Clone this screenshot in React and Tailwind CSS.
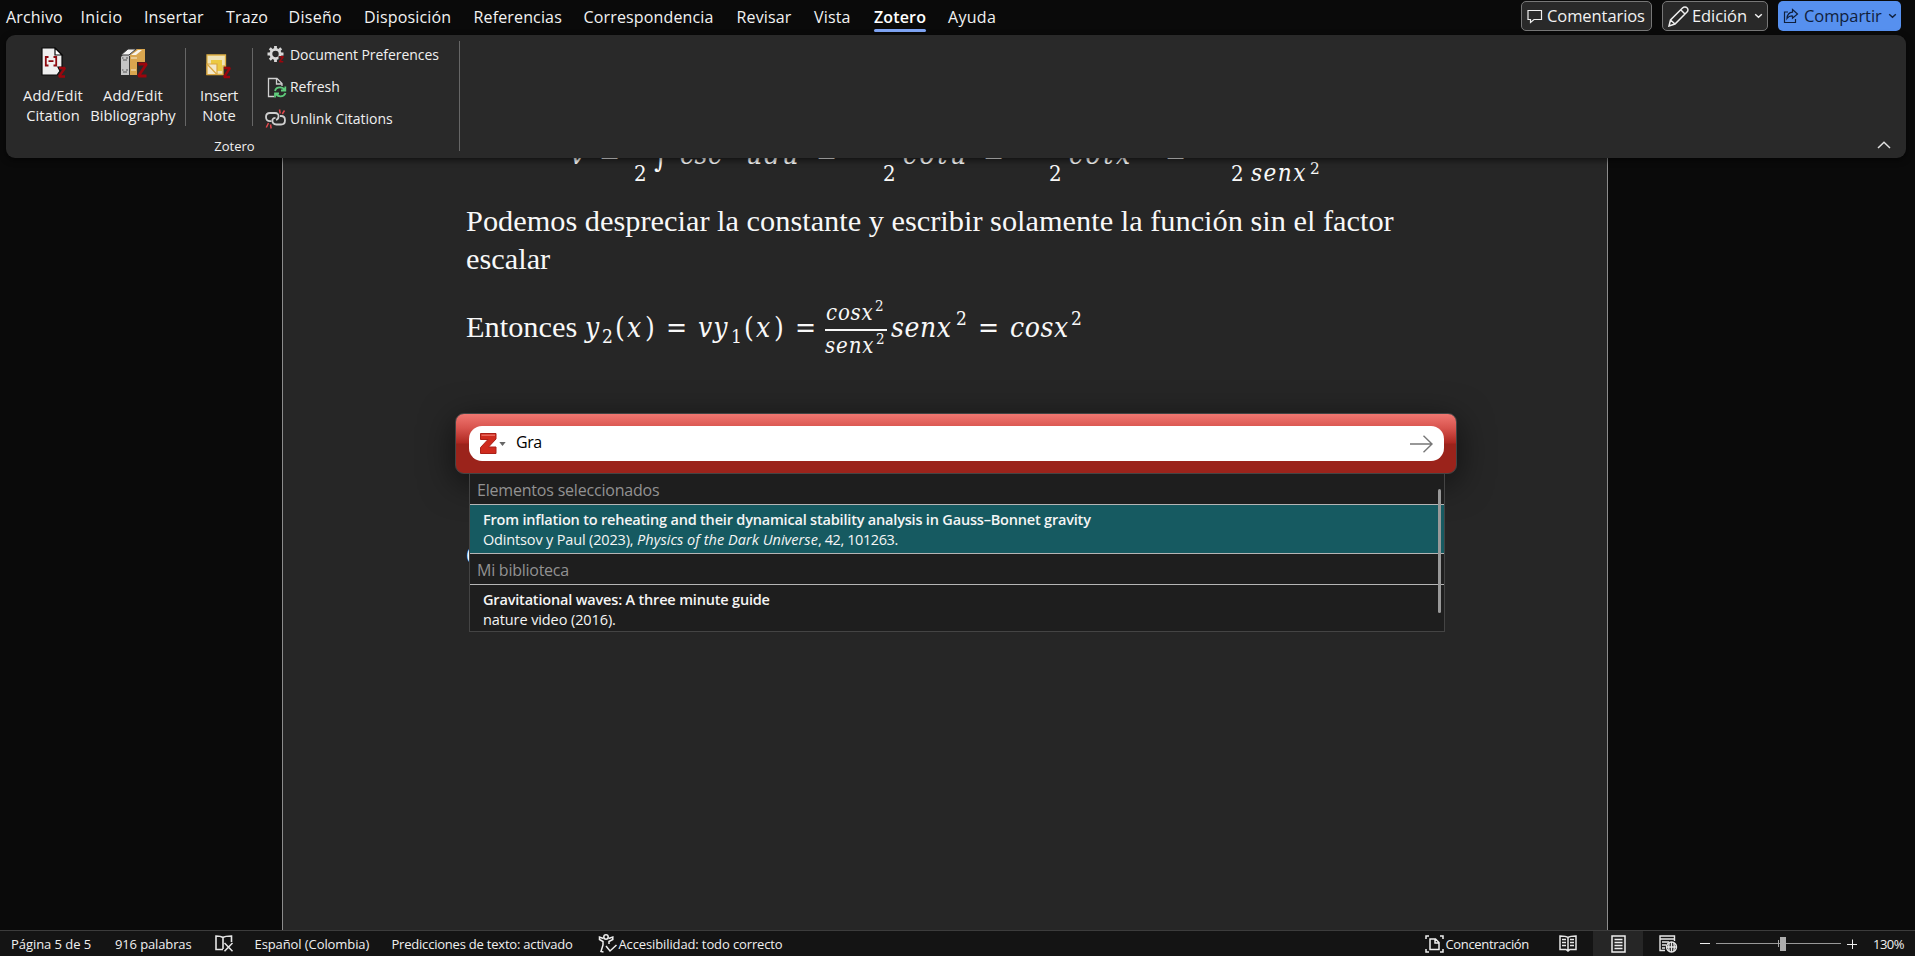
import React from "react";

const tabs = [
  ["Archivo", "w-[74.5px]"],
  ["Inicio", "w-[63.5px] tracking-[0.4px]"],
  ["Insertar", "w-[82px]"],
  ["Trazo", "w-[62.5px]"],
  ["Diseño", "w-[75.5px] tracking-[0.3px]"],
  ["Disposición", "w-[109.5px]"],
  ["Referencias", "w-[110px]"],
  ["Correspondencia", "w-[153px]"],
  ["Revisar", "w-[77.5px]"],
  ["Vista", "w-[60px]"],
  ["Zotero", "w-[74px]"],
  ["Ayuda", "w-[60px] tracking-[0.3px]"],
];

const Z = ({ x, y, w, h, sw = 2.6, color = "#9a060d" }) => (
  <path
    d={`M${x} ${y}H${x + w}L${x} ${y + h}H${x + w}`}
    fill="none"
    stroke={color}
    strokeWidth={sw}
    strokeLinejoin="bevel"
  />
);

const CitationIcon = () => (
  <svg width="26" height="32" viewBox="0 0 26 32">
    <path d="M1 1H14L21 8V20H17L19 24L16 28H1Z" fill="#efefef" stroke="#0a0a0a" strokeWidth="1.2" />
    <path d="M14 1V8H21Z" fill="#fff" stroke="#0a0a0a" strokeWidth="1.2" />
    <path d="M7.5 10H4.8V18.5H7.5M12.5 10H15.2V18.5H12.5M7.5 14.2H12.5" fill="none" stroke="#8e0a10" strokeWidth="1.8" />
    <Z x={18} y={21} w={6} h={8.500} sw={2.3} />
  </svg>
);

const BooksIcon = () => (
  <svg width="28" height="32" viewBox="0 0 28 32">
    <path d="M1 10L8 2H17L10 8V28H1Z" fill="#c4c4c4" />
    <path d="M1 8L8 2H16L9 8Z" fill="#f3f3f3" stroke="#333" strokeWidth="1" />
    <path d="M10 8L17 2H25V15H17V28H10Z" fill="#d9a64f" />
    <path d="M11 8L18 3H22L16 8Z" fill="#f8f4ea" />
    <path d="M11 11H17M11 23H16" stroke="#f6ead0" strokeWidth="1.2" />
    <path d="M2 11H3.500M6 11H8M3 13H7M2 23H3.500M6 23H8M3 25H7" stroke="#555" strokeWidth="1" />
    <path d="M9.500 9V28" stroke="#3a3a3a" strokeWidth="1" />
    <Z x={18.500} y={17} w={8} h={12} sw={2.800} />
  </svg>
);

const NoteIcon = () => (
  <svg width="26" height="26" viewBox="0 0 26 26">
    <path d="M1 1H19.500V12H17V20.500H1Z" fill="#efe3b8" stroke="#dfb145" strokeWidth="1.300" />
    <path d="M5 6H16V17H5Z" fill="#ecca42" />
    <path d="M1 10H11V20.500H1Z" fill="#f4e9ca" stroke="#d9a640" strokeWidth="1.200" />
    <path d="M1 10L11 20.500" stroke="#d9a640" strokeWidth="1.200" />
    <Z x={18} y={14} w={6} h={9} sw={2.300} />
  </svg>
);

const GearIcon = () => (
  <svg width="20" height="20" viewBox="0 0 20 20">
    <circle cx="8.500" cy="9" r="4.600" fill="none" stroke="#d8d8d8" strokeWidth="2.800" />
    <g stroke="#d8d8d8" strokeWidth="2.800">
      <path d="M8.500 1V4M8.500 14V17M0.500 9H3.500M13.500 9H16.500M2.800 3.300L5 5.500M12 12.500L14.200 14.700M14.200 3.300L12 5.500M5 12.500L2.800 14.700" />
    </g>
    <path d="M11.500 11H18V18H11.500Z" fill="#292929" />
    <Z x={12.500} y={11.800} w={3.800} h={5} sw={1.500} />
  </svg>
);

const RefreshIcon = () => (
  <svg width="20" height="21" viewBox="0 0 20 21" fill="none">
    <path d="M7 19.500H1.500V1.500H10L15 6.500V9M9.500 1.500V7H15" stroke="#d0d0d0" strokeWidth="1.300" />
    <g stroke="#5ecb7b" strokeWidth="1.800">
      <path d="M8 14C8.500 11.500 10.500 10.300 13 10.300C15 10.300 16.800 11.500 17.500 13M18.300 9.500V13.500H14" />
      <path d="M18.500 16C17.500 18.500 15.800 19.300 13.500 19.300C11.500 19.300 9.800 18.500 8.800 16.800M8 20.500V16.500H12" />
    </g>
  </svg>
);

const UnlinkIcon = () => (
  <svg width="21" height="20" viewBox="0 0 21 20" fill="none">
    <g stroke="#cfcfcf" strokeWidth="1.800">
      <path d="M6.500 12.200H5C2.500 12.200 1 10.500 1 8C1 5.500 2.500 4 5 4H10C12.500 4 14 5.500 13.500 7.800C13.300 9.500 12.500 10.500 11 10.800" />
      <path d="M15 7H16C18.500 7 20 8.500 20 11.200C20 14 18.500 15.500 16 15.500H11.500C8.500 15.500 7 13.500 7.500 10.500C8 9.300 9 8.800 10.500 8.800" />
    </g>
    <path d="M14.500 0.500L15.200 4.500M19.500 1.500L17.300 5M3.500 14L1.300 18.500M5.500 15.500L6.200 19.500" stroke="#e0484c" strokeWidth="1.500" />
  </svg>
);

const Caret = ({ className }) => (
  <svg width="9" height="6" viewBox="0 0 9 6" className={className}>
    <path d="M1.200 1.200L4.500 4.300L7.800 1.200" fill="none" stroke="currentColor" strokeWidth="1.400" />
  </svg>
);

function Header() {
  return (
    <header className="flex h-[35px] shrink-0 justify-between">
      <nav className="flex pt-[5px] pl-[6px] text-[16px] leading-[24px] tracking-[0.15px] text-[#f2f2f2]">
        {tabs.map(([label, cls]) => (
          <div key={label} className={cls}>
            {label === "Zotero" ? (
              <span className="inline-flex flex-col font-semibold text-white">
                {label}
                <i className="h-[3px] w-[52px] rounded-sm bg-[#7fa5f5]" />
              </span>
            ) : (
              label
            )}
          </div>
        ))}
      </nav>
      <div className="flex items-start gap-[10px] pt-px pr-[14px] text-[16.5px] leading-[30px] tracking-[-0.08px] text-[#f2f2f2]">
        <div className="flex h-[30px] w-[131px] items-center rounded-[5px] border border-[#777] bg-[#292929] pl-[5px]">
          <svg width="16" height="15" viewBox="0 0 16 15" className="mr-[4px] shrink-0">
            <path d="M1 1.500H14.500V10.500H7L3.500 13.500V10.500H1Z" fill="none" stroke="#eee" strokeWidth="1.200" />
          </svg>
          <span className="-mt-px">Comentarios</span>
        </div>
        <div className="flex h-[30px] w-[106px] items-center rounded-[5px] border border-[#777] bg-[#292929] pl-[5px]">
          <svg width="21" height="21" viewBox="0 0 21 21" className="mr-[3px] shrink-0">
            <path d="M1 20L2.500 14L14.500 2C16 0.500 18 0.700 19 1.800C20.300 3 20.200 4.800 19 6L7 18ZM12.700 3.800L17.200 8.200M2.500 14L7 18" fill="none" stroke="#eee" strokeWidth="1.500" />
          </svg>
          <span className="-mt-px">Edición</span>
          <Caret className="ml-[7px] shrink-0" />
        </div>
        <div className="flex h-[30px] w-[123px] items-center rounded-[5px] bg-[#5690ef] pl-[5px] text-[#10203c]">
          <svg width="16" height="16" viewBox="0 0 16 16" className="mr-[5px] shrink-0">
            <path d="M5 4H1.500V14.500H12.500V11M9.500 1.500L14.500 6L9.500 10.300V8C7 7.800 5.500 8.500 4 10.500C4.200 7 6 4.500 9.500 4.200Z" fill="none" stroke="currentColor" strokeWidth="1.200" />
          </svg>
          <span className="-mt-px">Compartir</span>
          <Caret className="ml-[6px] shrink-0" />
        </div>
      </div>
    </header>
  );
}

function Ribbon() {
  return (
    <section className="relative z-10 mr-[9px] ml-[6px] flex h-[123px] shrink-0 justify-between rounded-[9px] bg-[#292929] text-[14.7px] leading-[20px] text-[#f0f0f0] shadow-[0_2px_6px_rgba(0,0,0,0.6)]">
      <div className="mt-[6px] flex h-[110px] w-[454px] flex-col border-r border-[#666]">
        <div className="flex h-[88px] text-center">
          <div className="flex w-[94px] flex-col items-center pt-[6px]">
            <div className="flex h-[38px] items-start pl-px"><CitationIcon /></div>
            <span className="tracking-[0.15px]">Add/Edit</span>
            <span className="tracking-[0.05px]">Citation</span>
          </div>
          <div className="flex w-[66px] flex-col items-center pt-[6px]">
            <div className="flex h-[38px] items-start pl-[2px]"><BooksIcon /></div>
            <span className="tracking-[0.15px]">Add/Edit</span>
            <span className="tracking-[-0.05px] whitespace-nowrap">Bibliography</span>
          </div>
          <i className="mt-[7px] ml-[19px] h-[78px] w-px bg-[#666]" />
          <div className="flex w-[66px] flex-col items-center pt-[6px]">
            <div className="flex h-[38px] items-start pt-[7px]"><NoteIcon /></div>
            <span className="tracking-[-0.3px]">Insert</span>
            <span>Note</span>
          </div>
          <i className="mt-[7px] h-[78px] w-px bg-[#666]" />
          <ul className="ml-[12px] flex flex-col text-left text-[14px]">
            <li className="flex h-[28px] shrink-0 items-center"><span className="w-[25px] pl-[2px]"><GearIcon /></span><span className="tracking-[-0.05px]">Document Preferences</span></li>
            <li className="flex h-[36px] shrink-0 items-center"><span className="w-[25px] pl-[2px]"><RefreshIcon /></span><span className="tracking-[-0.05px]">Refresh</span></li>
            <li className="flex h-[28px] shrink-0 items-center"><span className="w-[25px]"><UnlinkIcon /></span><span>Unlink Citations</span></li>
          </ul>
        </div>
        <div className="pt-[8px] pl-[4px] text-center text-[13px] leading-[18px]">Zotero</div>
      </div>
      <svg width="14" height="8" viewBox="0 0 14 8" className="mt-[106px] mr-[15px]">
        <path d="M1 7L7 1.200L13 7" fill="none" stroke="#e0e0e0" strokeWidth="1.500" />
      </svg>
    </section>
  );
}

/* One token of a formula: its box runs up to the start of the next token. */
const T = ({ c = "", children }) => <span className={`inline-block shrink-0 whitespace-nowrap ${c}`}>{children}</span>;

function Document() {
  return (
    <main className="flex h-[772px] shrink-0 overflow-hidden">
      <article className="ml-[282px] flex w-[1326px] flex-col border-x border-[#8c8c8c] bg-[#262626] pl-[183px] font-['Liberation_Serif',serif] text-[30.35px] leading-[38px] text-[#f8f8f8]">
        <div className="-mt-[22px] flex h-[60px] items-baseline font-['DejaVu_Serif_Condensed','DejaVu_Serif',serif] text-[28px] italic">
          <T c="ml-[104px] w-[29px]">v</T>
          <T c="w-[35px] not-italic">=</T>
          <T c="w-[20px] translate-y-[17px] text-[22px] not-italic">2</T>
          <T c="w-[26px] translate-y-[3px] not-italic">∫</T>
          <T c="w-[66px] tracking-[0.5px]">csc</T>
          <T c="w-[70px] tracking-[2px]">udu</T>
          <T c="w-[67px] not-italic">=</T>
          <T c="w-[20px] translate-y-[17px] text-[22px] not-italic">2</T>
          <T c="w-[80px] tracking-[2.5px]">cotu</T>
          <T c="w-[66px] not-italic">=</T>
          <T c="w-[20px] translate-y-[17px] text-[22px] not-italic">2</T>
          <T c="w-[96px] tracking-[2.500px]">cotx</T>
          <T c="w-[66px] not-italic">=</T>
          <T c="w-[20px] translate-y-[17px] text-[22px] not-italic">2</T>
          <T c="w-[59px] translate-y-[17px] text-[24px] tracking-[1.5px]">senx</T>
          <T c="translate-y-[10px] text-[17px] not-italic">2</T>
        </div>
        <p className="mt-[6px] w-[960px]">Podemos despreciar la constante y escribir solamente la función sin el factor escalar</p>
        <div className="mt-[30px] flex h-[60px] items-baseline font-['DejaVu_Serif_Condensed','DejaVu_Serif',serif] text-[28px] italic">
          <T c="w-[119px] font-['Liberation_Serif',serif] text-[30.35px] not-italic">Entonces</T>
          <T c="w-[17px]">y</T>
          <T c="w-[13px] translate-y-[6px] text-[19px] not-italic">2</T>
          <T c="w-[12px] not-italic">(</T>
          <T c="w-[18px]">x</T>
          <T c="w-[21px] not-italic">)</T>
          <T c="w-[32px] not-italic">=</T>
          <T c="w-[33px] tracking-[1px]">vy</T>
          <T c="w-[13px] translate-y-[6px] text-[19px] not-italic">1</T>
          <T c="w-[12px] not-italic">(</T>
          <T c="w-[18px]">x</T>
          <T c="w-[21px] not-italic">)</T>
          <T c="w-[30px] not-italic">=</T>
          <span className="inline-flex w-[66px] shrink-0 flex-col text-[22px] leading-[30px]">
            <span className="flex h-[30px] -translate-y-[17px] items-baseline pl-px">
              <T c="w-[49px] tracking-[0.8px]">cosx</T>
              <T c="-translate-y-[9px] text-[15px] not-italic">2</T>
            </span>
            <i className="-mt-[15px] h-[2px] w-[62px] -translate-y-px bg-[#f8f8f8]" />
            <span className="flex h-[28px] -translate-y-px items-baseline">
              <T c="w-[51px] tracking-[0.9px]">senx</T>
              <T c="-translate-y-[9px] text-[15px] not-italic">2</T>
            </span>
          </span>
          <T c="w-[65px] tracking-[0.6px]">senx</T>
          <T c="w-[22px] -translate-y-[12px] text-[19px] not-italic">2</T>
          <T c="w-[32px] not-italic">=</T>
          <T c="w-[61px] tracking-[0.6px]">cosx</T>
          <T c="-translate-y-[12px] text-[19px] not-italic">2</T>
        </div>
        <p className="mt-[168px]">C</p>
      </article>
    </main>
  );
}

function CitationDialog() {
  return (
    <div className="absolute top-[413px] left-[455px] z-20 w-[1002px]">
      <div className="rounded-[9px] border border-[#444] bg-[linear-gradient(to_bottom,#f07771_0px,#d8544e_14px,#ae2821_29px,#9b231b_30px,#9b231b_100%)] px-[13px] py-[12px] shadow-[0_8px_34px_rgba(0,0,0,0.6)]">
        <div className="flex h-[35px] w-[975px] items-center rounded-[13px] bg-white pl-[11px] text-[16px] leading-[24px] text-black">
          <svg width="17" height="21" viewBox="0 0 17 21">
            <path d="M0.500 0.500H16V6L8.500 14H16V20.500H0.500V14.500L8 6.500H0.500Z" fill="#cf2b1e" stroke="#aa2018" />
            <path d="M1.500 1.500H15V3H1.500Z" fill="#e8685c" />
          </svg>
          <svg width="7" height="4" viewBox="0 0 7 4" className="ml-[2px]">
            <path d="M0.300 0H6.700L3.500 4Z" fill="#666" />
          </svg>
          <span className="-mt-[3px] ml-[10px] tracking-[-0.4px]">Gra</span>
          <svg width="23" height="18" viewBox="0 0 23 18" className="mr-[11px] ml-auto">
            <path d="M0 9H22M13.500 0.800L22 9L13.500 17.200" fill="none" stroke="#777" strokeWidth="1.400" />
          </svg>
        </div>
      </div>
      <div className="relative ml-[14px] h-[158px] w-[976px] border border-t-0 border-[#444] bg-[#1e1e1e] text-[14.5px] leading-[20px] text-[#f5f5f5]">
        <div className="h-[31px] border-b border-[#b5b5b5] pt-[4px] pl-[7px] text-[16px] leading-[24px] tracking-[-0.2px] text-[#929292]">Elementos seleccionados</div>
        <div className="h-[49px] border-b border-[#b5b5b5] bg-[#165a61] pt-[5px] pl-[13px]">
          <div className="font-semibold tracking-[-0.190px] whitespace-nowrap">From inflation to reheating and their dynamical stability analysis in Gauss–Bonnet gravity</div>
          <div className="tracking-[-0.16px] whitespace-pre">Odintsov y Paul (2023), <em className="tracking-[0.04px]">Physics of the Dark Universe</em><span className="tracking-[-0.4px]">, 42, 101263.</span></div>
        </div>
        <div className="h-[31px] border-b border-[#b5b5b5] pt-[4px] pl-[7px] text-[16px] leading-[24px] tracking-[-0.25px] text-[#929292]">Mi biblioteca</div>
        <div className="pt-[5px] pl-[13px]">
          <div className="font-semibold tracking-[-0.180px]">Gravitational waves: A three minute guide</div>
          <div className="tracking-[-0.1px]">nature video (2016).</div>
        </div>
        <i className="absolute top-[15px] right-[3px] h-[124px] w-[3px] rounded-full bg-[#999]" />
      </div>
    </div>
  );
}

function StatusBar() {
  return (
    <footer className="flex h-[26px] shrink-0 items-center border-t border-[#3c3c3c] bg-[#141414] pl-[11px] text-[13px] leading-[18px] whitespace-nowrap text-[#f0f0f0]">
      <span className="w-[104px] tracking-[-0.05px]">Página 5 de 5</span>
      <span className="w-[100px] tracking-[-0.13px]">916 palabras</span>
      <span className="w-[39.5px]">
        <svg width="19" height="17" viewBox="0 0 19 17">
          <path d="M8 2.500V14M8 2.500C6 1 3 1 1 1V14.500H8M8 2.500C10 1 13 1 16.500 1V7" fill="none" stroke="#e6e6e6" strokeWidth="1.600" />
          <path d="M9.500 8L17.500 16.300M17.500 8L9.500 16.300" stroke="#e6e6e6" strokeWidth="1.500" />
        </svg>
      </span>
      <span className="w-[137px] tracking-[-0.09px]">Español (Colombia)</span>
      <span className="w-[206.500px] tracking-[-0.21px]">Predicciones de texto: activado</span>
      <span className="w-[20.5px]">
        <svg width="20" height="19" viewBox="0 0 20 19" fill="none" stroke="#eee" strokeWidth="1.500">
          <circle cx="8" cy="3" r="2.200" />
          <path d="M5.500 4.500L1.500 3V5.500L5 7.500V11L3 17.500L5.500 18M10.500 4.500L14.800 3V5.500L11 7.500V10M8 12L12 17L18.500 11" />
        </svg>
      </span>
      <span className="w-[806px] tracking-[-0.12px]">Accesibilidad: todo correcto</span>
      <span className="w-[21px]">
        <svg width="19" height="18" viewBox="0 0 19 18" fill="none" stroke="#eee" strokeWidth="1.500">
          <path d="M4 1H1V4M15 1H18V4M4 17H1V14M15 17H18V14M5 4H10.500L14 7.500V14.500H5ZM10 4V8H14" />
        </svg>
      </span>
      <span className="w-[113.500px] tracking-[-0.35px]">Concentración</span>
      <span className="w-[34px]">
        <svg width="18" height="17" viewBox="0 0 18 17" fill="none" stroke="#e6e6e6" strokeWidth="1.500">
          <path d="M9 2.500V16M9 2.500C7 1 4 1 1 1V14.500H7L9 16L11 14.500H17V1C14 1 11 1 9 2.500" />
          <path d="M3 4.500H7M3 7.500H7M3 10.500H7M11 4.500H15M11 7.500H15M11 10.500H15" />
        </svg>
      </span>
      <span className="flex h-[25px] w-[50px] items-center justify-center bg-[#262626]">
        <svg width="15" height="18" viewBox="0 0 15 18" fill="none" stroke="#eee" strokeWidth="1.500">
          <path d="M1 1H14V17H1ZM3.500 4.500H11.500M3.500 7.500H11.500M3.500 10.500H11.500M3.500 13.500H11.500" />
        </svg>
      </span>
      <span className="ml-[16px] w-[41px]">
        <svg width="19" height="18" viewBox="0 0 19 18" fill="none" stroke="#e6e6e6" strokeWidth="1.400">
          <path d="M6 15.500H1V1H15.500V6M1 4H15.500M3 7H10M3 10H7M3 13H6" />
          <circle cx="12.500" cy="12" r="5" fill="#141414" />
          <path d="M7.500 12H17.500M12.500 7V17M10.200 8C9.500 10.500 9.500 13.500 10.200 16M14.800 8C15.500 10.500 15.500 13.500 14.800 16" />
        </svg>
      </span>
      <i className="h-px w-[10px] bg-[#eee]" />
      <span className="ml-[6px] flex h-[14px] w-[125px] items-center">
        <i className="h-px w-[62px] bg-[#999]" />
        <i className="h-[7px] w-px bg-[#aaa]" />
        <i className="h-px w-px bg-[#999]" />
        <i className="h-[14px] w-[6px] bg-[#adadad]" />
        <i className="h-px flex-1 bg-[#999]" />
      </span>
      <svg width="10" height="10" viewBox="0 0 10 10" className="ml-[6px]">
        <path d="M0 5.500H10M5.500 0.500V10" stroke="#eee" strokeWidth="1" />
      </svg>
      <span className="ml-[16px] tracking-[-0.5px]">130%</span>
    </footer>
  );
}

export default function App() {
  return (
    <div className="relative flex h-[956px] w-[1915px] flex-col overflow-hidden bg-[#0a0a0a] font-['Open_Sans',sans-serif] [&_svg]:shrink-0">
      <Header />
      <Ribbon />
      <Document />
      <StatusBar />
      <CitationDialog />
    </div>
  );
}
